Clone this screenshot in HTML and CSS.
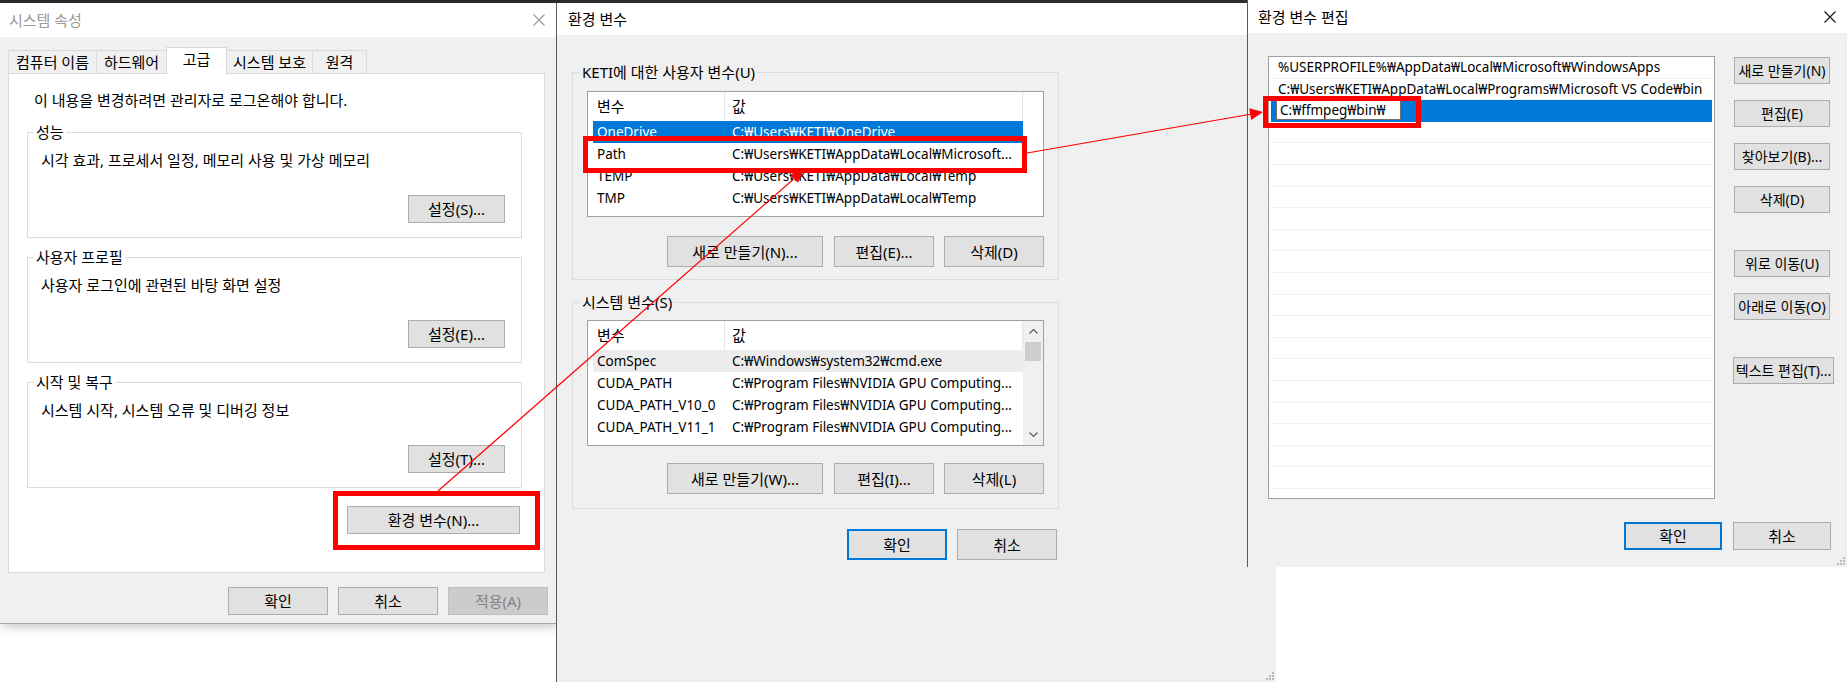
FILE: index.html
```html
<!DOCTYPE html>
<html lang="ko">
<head>
<meta charset="utf-8">
<title>환경 변수 설정</title>
<link rel="stylesheet" href="styles.css">
</head>
<body>
<div class="desk-strip"></div>

<section class="win win-sys">
  <header class="titlebar tb-sys">
    <span class="title title-inactive">시스템 속성</span>
    <svg class="close-x dim" viewBox="0 0 12 12"><path d="M0.5 0.5L11.5 11.5M11.5 0.5L0.5 11.5"/></svg>
  </header>
  <div class="sys-body">
    <nav class="tabs">
      <div class="tab tab-1">컴퓨터 이름</div>
      <div class="tab tab-2">하드웨어</div>
      <div class="tab tab-3 active">고급</div>
      <div class="tab tab-4">시스템 보호</div>
      <div class="tab tab-5">원격</div>
    </nav>
    <div class="tabpanel">
      <p class="note">이 내용을 변경하려면 관리자로 로그온해야 합니다.</p>
      <fieldset class="group sys-group">
        <legend>성능</legend>
        <p class="desc">시각 효과, 프로세서 일정, 메모리 사용 및 가상 메모리</p>
        <div class="group-actions"><button class="btn btn-set">설정(S)...</button></div>
      </fieldset>
      <fieldset class="group sys-group">
        <legend>사용자 프로필</legend>
        <p class="desc">사용자 로그인에 관련된 바탕 화면 설정</p>
        <div class="group-actions"><button class="btn btn-set">설정(E)...</button></div>
      </fieldset>
      <fieldset class="group sys-group">
        <legend>시작 및 복구</legend>
        <p class="desc">시스템 시작, 시스템 오류 및 디버깅 정보</p>
        <div class="group-actions"><button class="btn btn-set">설정(T)...</button></div>
      </fieldset>
      <div class="env-row"><button class="btn btn-env">환경 변수(N)...</button></div>
    </div>
    <div class="sys-footer">
      <button class="btn btn-dlg">확인</button>
      <button class="btn btn-dlg">취소</button>
      <button class="btn btn-dlg" disabled>적용(A)</button>
    </div>
  </div>
</section>

<section class="win win-env">
  <header class="titlebar tb-env">
    <span class="title">환경 변수</span>
  </header>
  <div class="env-body">
    <fieldset class="group env-group">
      <legend>KETI에 대한 사용자 변수(U)</legend>
      <div class="listview">
        <div class="lv-main">
          <div class="lv-head"><div class="lh1">변수</div><div class="lh2">값</div></div>
          <div class="lv-rows">
            <div class="lv-row selected"><span class="c1">OneDrive</span><span class="c2">C:₩Users₩KETI₩OneDrive</span></div>
            <div class="lv-row"><span class="c1">Path</span><span class="c2">C:₩Users₩KETI₩AppData₩Local₩Microsoft...</span></div>
            <div class="lv-row"><span class="c1">TEMP</span><span class="c2">C:₩Users₩KETI₩AppData₩Local₩Temp</span></div>
            <div class="lv-row"><span class="c1">TMP</span><span class="c2">C:₩Users₩KETI₩AppData₩Local₩Temp</span></div>
          </div>
        </div>
      </div>
      <div class="group-actions env-actions">
        <button class="btn btn-env2 btn-wide">새로 만들기(N)...</button>
        <button class="btn btn-env2">편집(E)...</button>
        <button class="btn btn-env2">삭제(D)</button>
      </div>
    </fieldset>
    <fieldset class="group env-group env-group-sys">
      <legend>시스템 변수(S)</legend>
      <div class="listview">
        <div class="lv-main">
          <div class="lv-head"><div class="lh1">변수</div><div class="lh2">값</div></div>
          <div class="lv-rows">
            <div class="lv-row hover"><span class="c1">ComSpec</span><span class="c2">C:₩Windows₩system32₩cmd.exe</span></div>
            <div class="lv-row"><span class="c1">CUDA_PATH</span><span class="c2">C:₩Program Files₩NVIDIA GPU Computing...</span></div>
            <div class="lv-row"><span class="c1">CUDA_PATH_V10_0</span><span class="c2">C:₩Program Files₩NVIDIA GPU Computing...</span></div>
            <div class="lv-row"><span class="c1">CUDA_PATH_V11_1</span><span class="c2">C:₩Program Files₩NVIDIA GPU Computing...</span></div>
          </div>
        </div>
        <div class="lv-scroll">
          <div class="sb-btn"><svg class="chev" viewBox="0 0 9 5"><path d="M0.5 4.5L4.5 0.5L8.5 4.5"/></svg></div>
          <div class="sb-thumb"></div>
          <div class="sb-track"></div>
          <div class="sb-btn"><svg class="chev" viewBox="0 0 9 5"><path d="M0.5 0.5L4.5 4.5L8.5 0.5"/></svg></div>
        </div>
      </div>
      <div class="group-actions env-actions">
        <button class="btn btn-env2 btn-wide">새로 만들기(W)...</button>
        <button class="btn btn-env2">편집(I)...</button>
        <button class="btn btn-env2">삭제(L)</button>
      </div>
    </fieldset>
    <div class="env-footer">
      <button class="btn btn-ok btn-default">확인</button>
      <button class="btn btn-ok">취소</button>
    </div>
  </div>
  <svg class="grip" viewBox="0 0 9 9"><rect x="7" y="1" width="2" height="2"/><rect x="4" y="4" width="2" height="2"/><rect x="7" y="4" width="2" height="2"/><rect x="1" y="7" width="2" height="2"/><rect x="4" y="7" width="2" height="2"/><rect x="7" y="7" width="2" height="2"/></svg>
</section>

<section class="win win-edit">
  <header class="titlebar tb-edit">
    <span class="title">환경 변수 편집</span>
    <svg class="close-x dark" viewBox="0 0 12 12"><path d="M0.5 0.5L11.5 11.5M11.5 0.5L0.5 11.5"/></svg>
  </header>
  <div class="edit-body">
    <div class="edit-main">
      <div class="pathlist">
        <div class="pl-row">%USERPROFILE%₩AppData₩Local₩Microsoft₩WindowsApps</div>
        <div class="pl-row">C:₩Users₩KETI₩AppData₩Local₩Programs₩Microsoft VS Code₩bin</div>
        <div class="pl-row selected"><span class="pl-edit">C:₩ffmpeg₩bin₩</span></div>
        <div class="pl-row"></div><div class="pl-row"></div><div class="pl-row"></div>
        <div class="pl-row"></div><div class="pl-row"></div><div class="pl-row"></div>
        <div class="pl-row"></div><div class="pl-row"></div><div class="pl-row"></div>
        <div class="pl-row"></div><div class="pl-row"></div><div class="pl-row"></div>
        <div class="pl-row"></div><div class="pl-row"></div><div class="pl-row"></div>
        <div class="pl-row"></div><div class="pl-row"></div><div class="pl-row"></div>
      </div>
      <div class="edit-actions">
        <button class="btn btn-side">새로 만들기(N)</button>
        <button class="btn btn-side">편집(E)</button>
        <button class="btn btn-side">찾아보기(B)...</button>
        <button class="btn btn-side">삭제(D)</button>
        <button class="btn btn-side spaced">위로 이동(U)</button>
        <button class="btn btn-side">아래로 이동(O)</button>
        <button class="btn btn-side spaced wider">텍스트 편집(T)...</button>
      </div>
    </div>
    <div class="edit-footer">
      <button class="btn btn-ok3 btn-default">확인</button>
      <button class="btn btn-ok3">취소</button>
    </div>
  </div>
  <svg class="grip" viewBox="0 0 9 9"><rect x="7" y="1" width="2" height="2"/><rect x="4" y="4" width="2" height="2"/><rect x="7" y="4" width="2" height="2"/><rect x="1" y="7" width="2" height="2"/><rect x="4" y="7" width="2" height="2"/><rect x="7" y="7" width="2" height="2"/></svg>
</section>

<svg class="annot" width="1847" height="683" viewBox="0 0 1847 683">
  <g fill="none" stroke="#ff0000" stroke-width="5">
    <rect x="335.5" y="493.5" width="202" height="54"/>
    <rect x="585.5" y="138.5" width="439" height="32"/>
    <rect x="1265.5" y="98.5" width="153" height="27"/>
  </g>
  <g stroke="#ff0000" stroke-width="1.2">
    <line x1="438" y1="491" x2="796" y2="177"/>
    <line x1="1027" y1="153" x2="1252" y2="114"/>
  </g>
  <g fill="#ff0000">
    <polygon points="804,170 797.9,182.7 790.6,174.5"/>
    <polygon points="1263,112 1251.2,120.1 1249.2,108.3"/>
  </g>
</svg>
</body>
</html>
```
FILE: styles.css
```css
* { box-sizing: border-box; }
html, body { margin: 0; padding: 0; }
body {
  position: relative;
  width: 1847px;
  height: 683px;
  overflow: hidden;
  background: #ffffff;
  font-family: "Noto Sans", "Noto Sans CJK KR", sans-serif;
  font-size: 15px;
  line-height: 20px;
  color: #000;
}
p { margin: 0; }

.desk-strip { position: absolute; left: 0; top: 0; width: 1247px; height: 3px; background: #2b2b2b; }

.win { position: absolute; display: flex; flex-direction: column; background: #f0f0f0; }
.titlebar { flex: none; display: flex; align-items: center; justify-content: space-between; background: #fff; }
.title { white-space: nowrap; }
.close-x { display: block; width: 12px; height: 12px; }
.close-x path { fill: none; stroke-width: 1.1; }
.close-x.dim path { stroke: #9a9a9a; }
.close-x.dark path { stroke: #111; }

/* buttons */
.btn {
  font: inherit;
  color: #000;
  background: #e1e1e1;
  border: 1px solid #adadad;
  padding: 0;
  margin: 0;
  text-align: center;
  white-space: nowrap;
  overflow: visible;
  flex: none;
}
.btn:disabled { background: #cccccc; border-color: #bfbfbf; color: #838383; }
.btn-default { border-color: #0078d7; box-shadow: inset 0 0 0 1px #0078d7; }

/* group boxes */
.group { margin: 0; border: 1px solid #dcdcdc; min-width: 0; }
.group legend { padding: 0 2px; margin-left: -7px; line-height: 20px; }
.group-actions { display: flex; justify-content: flex-end; }

/* ---------- 시스템 속성 ---------- */
.win-sys {
  left: 0; top: 3px; width: 556px; height: 620px; z-index: 1;
  box-shadow: 0 1px 0 #a6a6a6, 2px 4px 10px rgba(0,0,0,.22);
}
.tb-sys { height: 34px; padding: 0 11px 0 9px; }
.title-inactive { color: #9a9a9a; }
.sys-body { padding: 10px 8px 0 8px; display: flex; flex-direction: column; }
.tabs { display: flex; align-items: flex-end; height: 26px; }
.tab {
  height: 23px; border: 1px solid #d9d9d9; border-bottom: 0; margin-right: -1px;
  background: #f0f0f0; text-align: center; line-height: 22px; white-space: nowrap;
}
.tab.active { height: 27px; margin-bottom: -1px; background: #fff; position: relative; z-index: 1; }
.tab-1 { width: 89px; }
.tab-2 { width: 71px; }
.tab-3 { width: 61px; }
.tab-4 { width: 87px; }
.tab-5 { width: 55px; }
.tabpanel {
  height: 500px; margin-right: 3px; background: #fff; border: 1px solid #d9d9d9;
  padding: 16px 22px 0 18px; display: flex; flex-direction: column;
}
.note { padding-left: 7px; margin-bottom: 12px; }
.sys-group { padding: 8px 16px 14px 13px; margin-bottom: 9px; }
.sys-group .group-actions { margin-top: 25px; }
.btn-set { width: 97px; height: 28px; }
.env-row { display: flex; justify-content: flex-end; padding-right: 2px; margin-top: 9px; }
.btn-env { width: 173px; height: 28px; }
.sys-footer { display: flex; justify-content: flex-end; gap: 10px; margin-top: 14px; }
.btn-dlg { width: 100px; height: 28px; }

/* ---------- 환경 변수 ---------- */
.win-env { left: 556px; top: 3px; width: 720px; height: 679px; z-index: 2; border-left: 1px solid #5a5a5a; }
.tb-env { height: 32px; padding-left: 11px; }
.env-body { padding: 27px 0 0 15px; display: flex; flex-direction: column; align-items: flex-start; }
.env-group { width: 487px; padding: 9px 14px 12px 14px; }
.env-group-sys { margin-top: 12px; padding: 8px 14px 14px 14px; }
.env-actions { margin-top: 19px; gap: 10px; }
.env-group-sys .env-actions { margin-top: 17px; }
.btn-env2 { width: 100px; height: 31px; }
.btn-wide { width: 156px; margin-right: 1px; }
.env-footer { width: 487px; padding-right: 2px; margin-top: 20px; display: flex; justify-content: flex-end; gap: 10px; }
.btn-ok { width: 100px; height: 31px; }

.listview { height: 126px; border: 1px solid #a0a0a0; background: #fff; display: flex; overflow: hidden; }
.lv-main { width: 435px; flex: none; }
.lv-head { display: flex; height: 28px; line-height: 28px; }
.lh1 { width: 137px; padding-left: 9px; border-right: 1px solid #e5e5e5; }
.lh2 { width: 298px; padding-left: 7px; border-right: 1px solid #e5e5e5; }
.lv-rows { padding-top: 1px; }
.lv-row { display: flex; margin-left: 5px; height: 22px; line-height: 22px; white-space: nowrap; font-size: 13.5px; }
.lv-row .c1 { width: 134px; padding-left: 4px; flex: none; overflow: hidden; }
.lv-row .c2 { flex: 1; padding-left: 5px; overflow: hidden; }
.lv-row.selected { background: #0078d7; color: #fff; }
.lv-row.hover { background: #ececec; }
.lv-scroll { width: 20px; flex: none; background: #f0f0f0; display: flex; flex-direction: column; }
.sb-btn { height: 21px; display: flex; align-items: center; justify-content: center; }
.chev { width: 9px; height: 5px; display: block; }
.chev path { fill: none; stroke: #606060; stroke-width: 1.2; }
.sb-thumb { height: 19px; margin: 0 2px; background: #cdcdcd; }
.sb-track { flex: 1; }

.grip { position: absolute; right: 2px; bottom: 2px; width: 9px; height: 9px; }
.grip rect { fill: #b8b8b8; }

/* ---------- 환경 변수 편집 ---------- */
.win-edit { left: 1247px; top: 0; width: 600px; height: 567px; z-index: 3; border-left: 1px solid #5a5a5a; }
.tb-edit { height: 33px; padding: 0 11px 0 10px; }
.edit-body { padding: 23px 16px 0 20px; display: flex; flex-direction: column; }
.edit-main { display: flex; gap: 19px; align-items: flex-start; }
.pathlist { width: 447px; height: 443px; border: 1px solid #a0a0a0; background: #fff; overflow: hidden; flex: none; }
.pl-row {
  height: 21.6px; margin: 0 2px; border-bottom: 1px solid #f0f0f0; padding-left: 7px;
  line-height: 20.6px; white-space: nowrap; display: flex; align-items: center; font-size: 13.5px;
}
.pl-row.selected { background: #0078d7; border-bottom-color: #0078d7; padding-left: 5px; }
.pl-edit { width: 125px; height: 20px; border: 1px solid #6e6e6e; background: #fff; padding-left: 3px; line-height: 18px; }
.edit-actions { display: flex; flex-direction: column; gap: 16px; padding-top: 1px; }
.btn-side { width: 96px; height: 27px; font-size: 14px; }
.btn-side.spaced { margin-top: 21px; }
.btn-side.wider { width: 101px; margin-left: -1px; }
.edit-footer { display: flex; justify-content: flex-end; gap: 11px; margin-top: 23px; }
.btn-ok3 { width: 98px; height: 28px; }

/* annotations */
.annot { position: absolute; left: 0; top: 0; z-index: 10; pointer-events: none; }
```
